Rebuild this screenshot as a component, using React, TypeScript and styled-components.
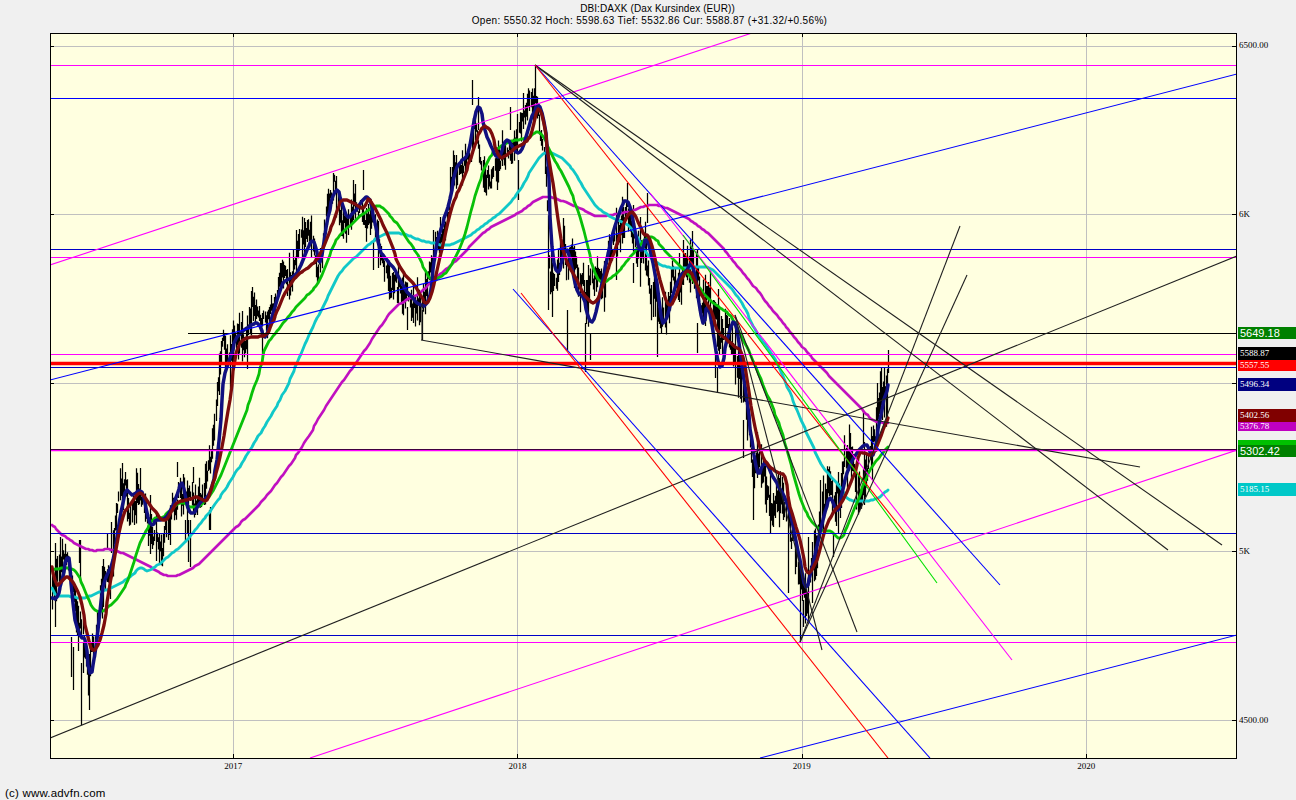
import React from "react";
import styled, { createGlobalStyle } from "styled-components";

type Pt = [number, number];

const GlobalStyle = createGlobalStyle`
  html, body { margin: 0; padding: 0; background: #f0f0f0; overflow: hidden; }
`;

const Page = styled.div`
  width: 1296px;
  height: 800px;
  display: flex;
  flex-direction: column;
  background: #f0f0f0;
  color: #000;
`;
const Header = styled.header`
  height: 33px;
  box-sizing: border-box;
  padding-top: 3px;
  text-align: center;
  font: 10px/12px "Liberation Sans", Arial, sans-serif;
`;
const TitleLine = styled.div<{ $spacing: number; $inset: number }>`
  letter-spacing: ${(p) => p.$spacing}px;
  padding-left: ${(p) => p.$inset}px;
`;
const ChartRow = styled.div`
  display: flex;
  padding-left: 50px;
  height: 726px;
`;
const Plot = styled.div`
  width: 1187px;
  height: 726px;
  box-sizing: border-box;
  border: 1px solid #000;
  background: #ffffe0;
`;
const PlotSvg = styled.svg`
  display: block;
  width: 1185px;
  height: 724px;
`;
const PriceAxis = styled.div`
  position: relative;
  flex: 1;
`;
const AxisLabel = styled.span<{ $y: number }>`
  position: absolute;
  left: 2px;
  top: ${(p) => p.$y}px;
  font: 9px/10px "Liberation Serif", "Times New Roman", serif;
`;
const PriceTag = styled.div<{ $y: number; $h: number; $bg: string; $big?: boolean }>`
  position: absolute;
  left: 1px;
  right: 0;
  top: ${(p) => p.$y}px;
  height: ${(p) => p.$h}px;
  background: ${(p) => p.$bg};
  color: #fff;
  padding-left: 2px;
  white-space: nowrap;
  font: ${(p) =>
    p.$big
      ? `11px/${p.$h}px "Liberation Sans", Arial, sans-serif`
      : `9px/${p.$h}px "Liberation Serif", "Times New Roman", serif`};
`;
const YearAxis = styled.div`
  display: flex;
  margin-left: 91px;
  height: 13px;
  margin-top: 1px;
`;
const YearCell = styled.div`
  width: 284.33px;
  text-align: center;
  font: 9px/13px "Liberation Serif", "Times New Roman", serif;
`;
const Footer = styled.footer`
  margin-top: 13px;
  padding-left: 5px;
  font: 11.5px/14px "Liberation Sans", Arial, sans-serif;
  letter-spacing: 0.2px;
`;

const navy: Pt[] = [[51,598],[57,597],[62,580],[67,558],[70,567],[75,620],[82,638],[85,640],[90,673],[95,653],[103,587],[113,560],[123,503],[127,490],[132,495],[142,492],[150,523],[157,520],[165,518],[173,505],[182,483],[188,508],[193,513],[200,503],[210,492],[217,460],[222,400],[225,373],[233,350],[237,337],[257,323],[265,337],[275,307],[283,283],[297,273],[310,243],[315,245],[320,262],[328,217],[337,190],[348,217],[367,197],[375,223],[380,250],[395,270],[407,292],[427,303],[437,243],[448,207],[457,167],[468,153],[478,107],[487,137],[498,157],[507,140],[520,152],[538,105],[547,147],[552,247],[558,272],[567,250],[577,290],[583,297],[592,322],[602,283],[617,220],[628,202],[640,250],[647,240],[657,283],[663,323],[677,283],[687,270],[693,267],[703,323],[708,307],[720,367],[727,340],[735,323],[743,373],[752,440],[758,473],[765,463],[773,477],[782,492],[790,513],[800,560],[806,587],[813,563],[823,520],[830,498],[838,510],[847,473],[857,453],[867,445],[873,455],[882,410],[888,385]];
const maroon: Pt[] = [[52,567],[57,585],[68,577],[80,597],[87,633],[93,650],[102,633],[113,567],[123,517],[130,505],[140,493],[152,508],[165,520],[177,503],[187,500],[197,497],[207,500],[213,483],[220,457],[230,400],[235,360],[243,340],[265,335],[272,323],[287,290],[298,275],[318,258],[333,223],[343,200],[363,208],[370,200],[387,233],[400,267],[413,283],[428,302],[440,257],[452,207],[463,180],[480,132],[490,130],[500,157],[517,147],[530,137],[540,110],[553,183],[563,250],[577,280],[587,298],[597,300],[610,263],[630,213],[643,233],[650,240],[660,280],[670,305],[683,277],[690,272],[703,297],[712,313],[717,330],[733,345],[743,357],[753,417],[763,457],[777,472],[785,477],[790,507],[800,540],[807,572],[817,560],[825,530],[833,513],[843,500],[855,473],[860,453],[873,453],[888,418]];
const green: Pt[] = [[52,570],[67,568],[78,575],[95,610],[113,603],[128,580],[140,543],[153,520],[163,517],[180,503],[192,507],[203,503],[217,483],[235,440],[250,400],[262,363],[268,343],[300,303],[318,283],[333,247],[343,232],[372,208],[387,212],[413,247],[430,278],[440,277],[450,267],[463,240],[477,190],[490,157],[507,143],[527,138],[540,133],[553,157],[567,183],[580,217],[593,267],[602,282],[617,273],[630,257],[650,237],[667,253],[687,273],[707,297],[720,308],[733,320],[757,370],[780,427],[787,450],[797,487],[805,510],[818,528],[832,532],[842,537],[857,503],[870,470],[888,447]];
const cyan: Pt[] = [[52,588],[57,596],[67,596],[83,598],[97,593],[113,587],[130,577],[140,568],[150,570],[170,555],[187,540],[203,520],[218,500],[250,450],[280,400],[297,363],[313,327],[325,303],[340,273],[360,253],[377,238],[390,233],[403,234],[420,240],[433,243],[448,245],[467,237],[487,223],[503,210],[520,190],[533,167],[545,153],[560,157],[573,170],[583,187],[597,207],[613,218],[630,227],[650,257],[667,267],[687,268],[707,267],[720,277],[740,300],[757,333],[777,363],[797,410],[810,440],[823,467],[840,487],[850,500],[873,500],[888,490]];
const purple: Pt[] = [[52,525],[67,538],[90,550],[113,550],[143,563],[170,576],[197,565],[230,533],[263,500],[300,450],[330,400],[360,357],[393,310],[420,293],[433,280],[460,257],[487,230],[520,212],[545,197],[577,207],[597,216],[627,212],[653,205],[677,213],[700,227],[720,245],[745,275],[767,303],[783,323],[807,352],[840,387],[860,407],[873,420],[888,423]];

const maLines: { pts: Pt[]; color: string; w: number }[] = [
  { pts: purple, color: "#c010c0", w: 2.6 },
  { pts: cyan, color: "#10c8c8", w: 2.8 },
  { pts: green, color: "#08c008", w: 2.8 },
  { pts: navy, color: "#101080", w: 3.5 },
  { pts: maroon, color: "#7c0c0c", w: 3.3 },
];

const spikes: [number, number, number][] = [
  [472,80,105],[478,97,130],[535,65,100],[523,93,113],[510,107,130],[518,160,200],[497,167,190],[548,240,310],[552,290,317],[567,310,350],[585,323,372],[590,333,360],[627,183,207],[647,193,223],[633,263,283],[653,283,317],[657,310,357],[683,240,267],[697,323,353],[705,283,310],[715,350,378],[422,310,340],
  [717,367,393],[743,420,458],[753,470,520],[773,493,527],[788,533,593],[800,580,642],[803,600,627],[808,537,573],[838,487,533],[833,533,557],[820,480,527],[850,433,450],[863,410,447],[877,383,403],[882,387,420],[888,350,373],[872,450,480],
  [252,287,307],[233,327,350],[262,330,360],[293,250,273],[280,263,280],[318,273,282],[305,222,247],[333,173,193],[363,170,190],[353,180,203],[373,240,270],[378,247,268],[397,287,303],[407,307,330],[392,273,290],[422,310,323],[450,167,190],[440,217,233],[433,230,257],
  [80,540,580],[81,663,725],[89,673,710],[73,647,690],[71,637,677],[55,543,627],[60,537,563],[83,643,673],[107,533,550],[168,523,540],[159,533,557],[148,527,543],[185,520,543],[190,520,567],[209,510,530],[122,463,493],[140,468,497],[177,462,477],[79,540,563],[111,522,553],[159,543,565],[168,525,540],[188,520,562],[210,507,530],[193,467,483],
];

// Catmull-Rom through the read-off points, sampled and snapped to whole pixels:
// the moving averages of the reference have this slightly stepped look.
function curve(pts: Pt[]): string {
  let d = `M${pts[0][0]} ${pts[0][1]}`;
  for (let i = 0; i < pts.length - 1; i++) {
    const p0 = pts[Math.max(i - 1, 0)];
    const p1 = pts[i];
    const p2 = pts[i + 1];
    const p3 = pts[Math.min(i + 2, pts.length - 1)];
    const steps = Math.max(1, Math.round((p2[0] - p1[0]) / 2));
    for (let s = 1; s <= steps; s++) {
      const t = s / steps;
      const t2 = t * t;
      const t3 = t2 * t;
      const at = (k: 0 | 1) =>
        0.5 *
        (2 * p1[k] +
          (p2[k] - p0[k]) * t +
          (2 * p0[k] - 5 * p1[k] + 4 * p2[k] - p3[k]) * t2 +
          (3 * p1[k] - p0[k] - 3 * p2[k] + p3[k]) * t3);
      d += `L${Math.round(at(0))} ${Math.round(at(1))}`;
    }
  }
  return d;
}

function sample(pts: Pt[], x: number): number {
  if (x <= pts[0][0]) return pts[0][1];
  for (let i = 0; i < pts.length - 1; i++) {
    if (x <= pts[i + 1][0]) {
      const t = (x - pts[i][0]) / (pts[i + 1][0] - pts[i][0]);
      return pts[i][1] + t * (pts[i + 1][1] - pts[i][1]);
    }
  }
  return pts[pts.length - 1][1];
}

function priceBars(): string {
  let seed = 20190412;
  const rnd = () => {
    seed = (seed * 1664525 + 1013904223) >>> 0;
    return seed / 4294967296;
  };
  let d = "";
  let walk = 0;
  for (let x = 52; x <= 887; x += 1.09) {
    const vol = x > 545 && x < 890 ? 1.5 : x < 250 ? 1.25 : 1;
    walk = walk * 0.9 + (rnd() - 0.5) * 18 * vol;
    const c = sample(navy, x + 2.5) + walk;
    const half = (3.5 + rnd() * rnd() * 22) * vol;
    d += `M${Math.round(x) + 0.5} ${(c - half).toFixed(1)}V${(c + half).toFixed(1)}`;
  }
  for (const [x, a, b] of spikes) d += `M${x + 0.5} ${a}V${b}`;
  return d;
}

const gridX = [233, 517, 802, 1086];
const gridY = [46, 214, 383, 551, 720];

const levels: { y: number; x1?: number; color: string; w?: number }[] = [
  { y: 65.5, color: "#ff00ff" },
  { y: 98.5, color: "#0000ff" },
  { y: 249.5, color: "#0000c8" },
  { y: 257.5, color: "#ff00ff" },
  { y: 333.5, x1: 188, color: "#000000" },
  { y: 354.5, color: "#ff00ff" },
  { y: 363.5, color: "#ff0000", w: 3.4 },
  { y: 367.5, color: "#0000c8" },
  { y: 449.5, color: "#000000" },
  { y: 450.5, color: "#ff00ff", w: 1.4 },
  { y: 533.5, color: "#0000c8" },
  { y: 635.5, color: "#0000c8" },
  { y: 642.5, color: "#ff00ff", w: 1.2 },
];

const trends: { x1: number; y1: number; x2: number; y2: number; color: string }[] = [
  { x1: 50, y1: 265, x2: 752, y2: 33, color: "#ff00ff" },
  { x1: 50, y1: 380, x2: 1237, y2: 74, color: "#0000ff" },
  { x1: 50, y1: 738, x2: 1237, y2: 256, color: "#202020" },
  { x1: 310, y1: 758, x2: 1237, y2: 450, color: "#ff00ff" },
  { x1: 760, y1: 758, x2: 1237, y2: 635, color: "#0000ff" },
  { x1: 535, y1: 65, x2: 1168, y2: 550, color: "#202020" },
  { x1: 535, y1: 65, x2: 1222, y2: 545, color: "#202020" },
  { x1: 421, y1: 340, x2: 1140, y2: 467, color: "#202020" },
  { x1: 422, y1: 304, x2: 422, y2: 340, color: "#202020" },
  { x1: 535, y1: 65, x2: 1000, y2: 585, color: "#0000ff" },
  { x1: 513, y1: 289, x2: 930, y2: 758, color: "#0000ff" },
  { x1: 521, y1: 293, x2: 888, y2: 758, color: "#ff0000" },
  { x1: 535, y1: 65, x2: 905, y2: 533, color: "#ff0000" },
  { x1: 650, y1: 193, x2: 1012, y2: 660, color: "#ff00ff" },
  { x1: 683, y1: 235, x2: 937, y2: 583, color: "#00e000" },
  { x1: 800, y1: 642, x2: 960, y2: 226, color: "#202020" },
  { x1: 800, y1: 642, x2: 967, y2: 275, color: "#202020" },
  { x1: 735, y1: 315, x2: 857, y2: 632, color: "#202020" },
  { x1: 735, y1: 315, x2: 822, y2: 650, color: "#202020" },
];

const axisLabels: { y: number; t: string }[] = [
  { y: 7, t: "6500.00" },
  { y: 176, t: "6K" },
  { y: 513, t: "5K" },
  { y: 682, t: "4500.00" },
];

const tags: { y: number; h: number; bg: string; t: string; big?: boolean }[] = [
  { y: 294, h: 12, bg: "#008000", t: "5649.18", big: true },
  { y: 314, h: 13, bg: "#000000", t: "5588.87" },
  { y: 327, h: 11, bg: "#ff0000", t: "5557.55" },
  { y: 345, h: 13, bg: "#000080", t: "5496.34" },
  { y: 376, h: 13, bg: "#800000", t: "5402.56" },
  { y: 389, h: 9, bg: "#c000c0", t: "5376.78" },
  { y: 407, h: 6, bg: "#00c000", t: "" },
  { y: 412, h: 12, bg: "#008000", t: "5302.42", big: true },
  { y: 450, h: 13, bg: "#00c8c8", t: "5185.15" },
];

const tickPath =
  gridY.map((y) => `M51 ${y + 0.5}H54M1232 ${y + 0.5}H1236`).join("") +
  gridX.map((x) => `M${x + 0.5} 34V37M${x + 0.5} 754V758`).join("");

export default function App() {
  const bars = React.useMemo(priceBars, []);
  return (
    <Page>
      <GlobalStyle />
      <Header>
        <TitleLine $spacing={0.1} $inset={19}>DBI:DAXK (Dax Kursindex (EUR))</TitleLine>
        <TitleLine $spacing={0.33} $inset={3}>Open: 5550.32 Hoch: 5598.63 Tief: 5532.86 Cur: 5588.87 (+31.32/+0.56%)</TitleLine>
      </Header>
      <ChartRow>
        <Plot>
          <PlotSvg viewBox="51 34 1185 724" fill="none">
            {gridX.map((x) => (
              <line key={x} x1={x + 0.5} x2={x + 0.5} y1={34} y2={758} stroke="#c0c0c0" />
            ))}
            {gridY.map((y) => (
              <line key={y} x1={51} x2={1236} y1={y + 0.5} y2={y + 0.5} stroke="#c0c0c0" />
            ))}
            <path d={tickPath} stroke="#000" />
            <path d={bars} stroke="#000" strokeWidth={1.25} />
            {maLines.map((m) => (
              <path key={m.color} d={curve(m.pts)} stroke={m.color} strokeWidth={m.w} strokeLinejoin="round" strokeLinecap="round" />
            ))}
            {levels.map((l) => (
              <line key={l.y} x1={l.x1 ?? 51} x2={1236} y1={l.y} y2={l.y} stroke={l.color} strokeWidth={l.w ?? 1} />
            ))}
            {trends.map((t, i) => (
              <line key={i} x1={t.x1} y1={t.y1} x2={t.x2} y2={t.y2} stroke={t.color} strokeWidth={1.1} />
            ))}
          </PlotSvg>
        </Plot>
        <PriceAxis>
          {axisLabels.map((a) => (
            <AxisLabel key={a.t} $y={a.y}>{a.t}</AxisLabel>
          ))}
          {tags.map((t) => (
            <PriceTag key={t.y} $y={t.y} $h={t.h} $bg={t.bg} $big={t.big}>{t.t}</PriceTag>
          ))}
        </PriceAxis>
      </ChartRow>
      <YearAxis>
        {["2017", "2018", "2019", "2020"].map((y) => (
          <YearCell key={y}>{y}</YearCell>
        ))}
      </YearAxis>
      <Footer>(c) www.advfn.com</Footer>
    </Page>
  );
}
